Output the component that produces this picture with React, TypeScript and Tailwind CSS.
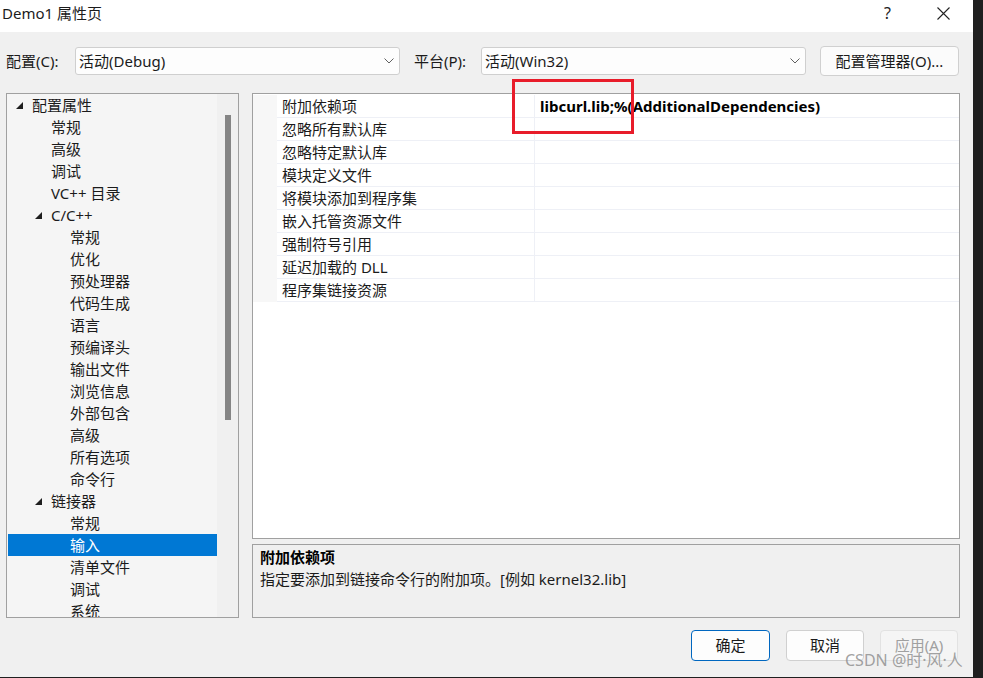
import React from "react";

const FONT = "font-['Noto_Sans','Noto_Sans_CJK_SC',sans-serif]";

type Item = { label: string; level: number; expand?: boolean; selected?: boolean };

const tree: Item[] = [
  { label: "配置属性", level: 0, expand: true },
  { label: "常规", level: 1 },
  { label: "高级", level: 1 },
  { label: "调试", level: 1 },
  { label: "VC++ 目录", level: 1 },
  { label: "C/C++", level: 1, expand: true },
  { label: "常规", level: 2 },
  { label: "优化", level: 2 },
  { label: "预处理器", level: 2 },
  { label: "代码生成", level: 2 },
  { label: "语言", level: 2 },
  { label: "预编译头", level: 2 },
  { label: "输出文件", level: 2 },
  { label: "浏览信息", level: 2 },
  { label: "外部包含", level: 2 },
  { label: "高级", level: 2 },
  { label: "所有选项", level: 2 },
  { label: "命令行", level: 2 },
  { label: "链接器", level: 1, expand: true },
  { label: "常规", level: 2 },
  { label: "输入", level: 2, selected: true },
  { label: "清单文件", level: 2 },
  { label: "调试", level: 2 },
  { label: "系统", level: 2 },
];

const props = [
  "附加依赖项",
  "忽略所有默认库",
  "忽略特定默认库",
  "模块定义文件",
  "将模块添加到程序集",
  "嵌入托管资源文件",
  "强制符号引用",
  "延迟加载的 DLL",
  "程序集链接资源",
];

function Chevron() {
  return (
    <svg width="10" height="6" viewBox="0 0 10 6" className="shrink-0">
      <polyline points="0.5,0.5 5,5 9.5,0.5" fill="none" stroke="#606060" strokeWidth="1" />
    </svg>
  );
}

function Triangle() {
  return (
    <svg width="7" height="7" viewBox="0 0 7 7" className="shrink-0">
      <polygon points="7,0 7,7 0,7" fill="#1e1e1e" />
    </svg>
  );
}

function Combo({ text, width }: { text: string; width: string }) {
  return (
    <div
      className={`${width} h-[28px] bg-[#fdfdfd] border border-[#cfcfcf] rounded-[3px] flex items-center justify-between pl-[3px] pr-[5px]`}
    >
      <span className="text-[15px] leading-none text-[#1b1b1b]">{text}</span>
      <Chevron />
    </div>
  );
}

export default function App() {
  return (
    <div className={`w-[983px] h-[678px] flex bg-[#1f1f1f] overflow-hidden ${FONT}`}>
      <div className="w-[973px] h-[677px] flex flex-col bg-[#f0f0f0] text-[#1b1b1b] relative">
        {/* Title bar */}
        <div className="h-[32px] bg-white flex items-center shrink-0">
          <span className="pl-[2px] text-[15px] leading-none -mt-[6px] text-[#1b1b1b]">Demo1 属性页</span>
          <div className="flex-1" />
          <span className="text-[16px] leading-none -mt-[6px] mr-[46px] text-[#222]">?</span>
          <svg width="13" height="13" viewBox="0 0 13 13" className="mr-[23px] -mt-[6px]">
            <path d="M0.5 0.5 L12.5 12.5 M12.5 0.5 L0.5 12.5" stroke="#222" strokeWidth="1.1" />
          </svg>
        </div>

        {/* Config row */}
        <div className="flex items-center mt-[14px] h-[30px] pl-[6px]">
          <span className="text-[15px] leading-none w-[69px]">配置(C):</span>
          <Combo text="活动(Debug)" width="w-[325px]" />
          <span className="text-[15px] leading-none ml-[14px] w-[67px]">平台(P):</span>
          <Combo text="活动(Win32)" width="w-[325px]" />
          <div className="ml-[14px] w-[139px] h-[30px] bg-[#fbfbfb] border border-[#d0d0d0] rounded-[4px] flex items-center justify-center text-[15px] leading-none">
            配置管理器(O)...
          </div>
        </div>

        {/* Main area */}
        <div className="flex mt-[17px] pl-[6px] h-[525px]">
          {/* Tree */}
          <div className="w-[233px] h-[525px] border border-[#a0a0a0] bg-[#f5f5f5] flex overflow-hidden">
            <div className="flex-1 flex flex-col pl-[1px]">
              {tree.map((it, i) => (
                <div
                  key={i}
                  className={`h-[22px] shrink-0 flex items-center text-[15px] leading-none ${
                    it.selected ? "bg-[#0078d4] text-white" : ""
                  }`}
                >
                  <div
                    className={`flex items-center justify-end pr-[9px] shrink-0 ${
                      it.level === 0 ? "w-[24px]" : it.level === 1 ? "w-[43px]" : "w-[62px]"
                    }`}
                  >
                    {it.expand ? <Triangle /> : null}
                  </div>
                  <span>{it.label}</span>
                </div>
              ))}
            </div>
            <div className="w-[21px] bg-[#f0f0f0] flex justify-center pt-[21px]">
              <div className="w-[6px] h-[305px] bg-[#858585]" />
            </div>
          </div>

          {/* Right */}
          <div className="ml-[13px] w-[708px] flex flex-col">
            <div className="h-[447px] border border-[#a0a0a0] bg-white flex flex-col pt-[1px]">
              {props.map((p, i) => (
                <div key={i} className="h-[23px] flex shrink-0">
                  <div className="w-[24px] bg-[#f7f7f7]" />
                  <div className="w-[258px] flex items-center pl-[5px] border-b border-r border-[#eef0f6] text-[15px] leading-none">
                    {p}
                  </div>
                  <div className="flex-1 flex items-center pl-[5px] border-b border-[#eef0f6] text-[15px] leading-none font-bold text-black">
                    {i === 0 ? "libcurl.lib;%(AdditionalDependencies)" : ""}
                  </div>
                </div>
              ))}
            </div>
            <div className="mt-[5px] h-[74px] border border-[#a0a0a0] bg-[#f0f0f0] px-[7px] pt-[1px] flex flex-col">
              <div className="text-[15px] leading-[22px] font-bold text-black">附加依赖项</div>
              <div className="text-[15px] leading-[22px]">指定要添加到链接命令行的附加项。[例如 kernel32.lib]</div>
            </div>
          </div>
        </div>

        {/* Buttons */}
        <div className="flex justify-end mt-[12px] pr-[15px] gap-[16px]">
          <div className="w-[79px] h-[31px] rounded-[4px] border border-[#0067c0] bg-[#fdfdfd] flex items-center justify-center text-[15px] leading-none">
            确定
          </div>
          <div className="w-[78px] h-[31px] rounded-[4px] border border-[#d0d0d0] bg-[#fdfdfd] flex items-center justify-center text-[15px] leading-none">
            取消
          </div>
          <div className="w-[78px] h-[31px] rounded-[4px] border border-[#e2e2e2] bg-[#f5f5f5] flex items-center justify-center text-[15px] leading-none text-[#a0a0a0]">
            应用(A)
          </div>
        </div>

        {/* Red annotation box */}
        <div className="absolute left-[512px] top-[79px] w-[122px] h-[55px] border-[3px] border-[#e81c2a]" />

        {/* Watermark */}
        <div className="absolute left-[845px] top-[652px] text-[16px] leading-none text-[#8a8a8a]/80">
          CSDN @时·风·人
        </div>
      </div>
    </div>
  );
}
